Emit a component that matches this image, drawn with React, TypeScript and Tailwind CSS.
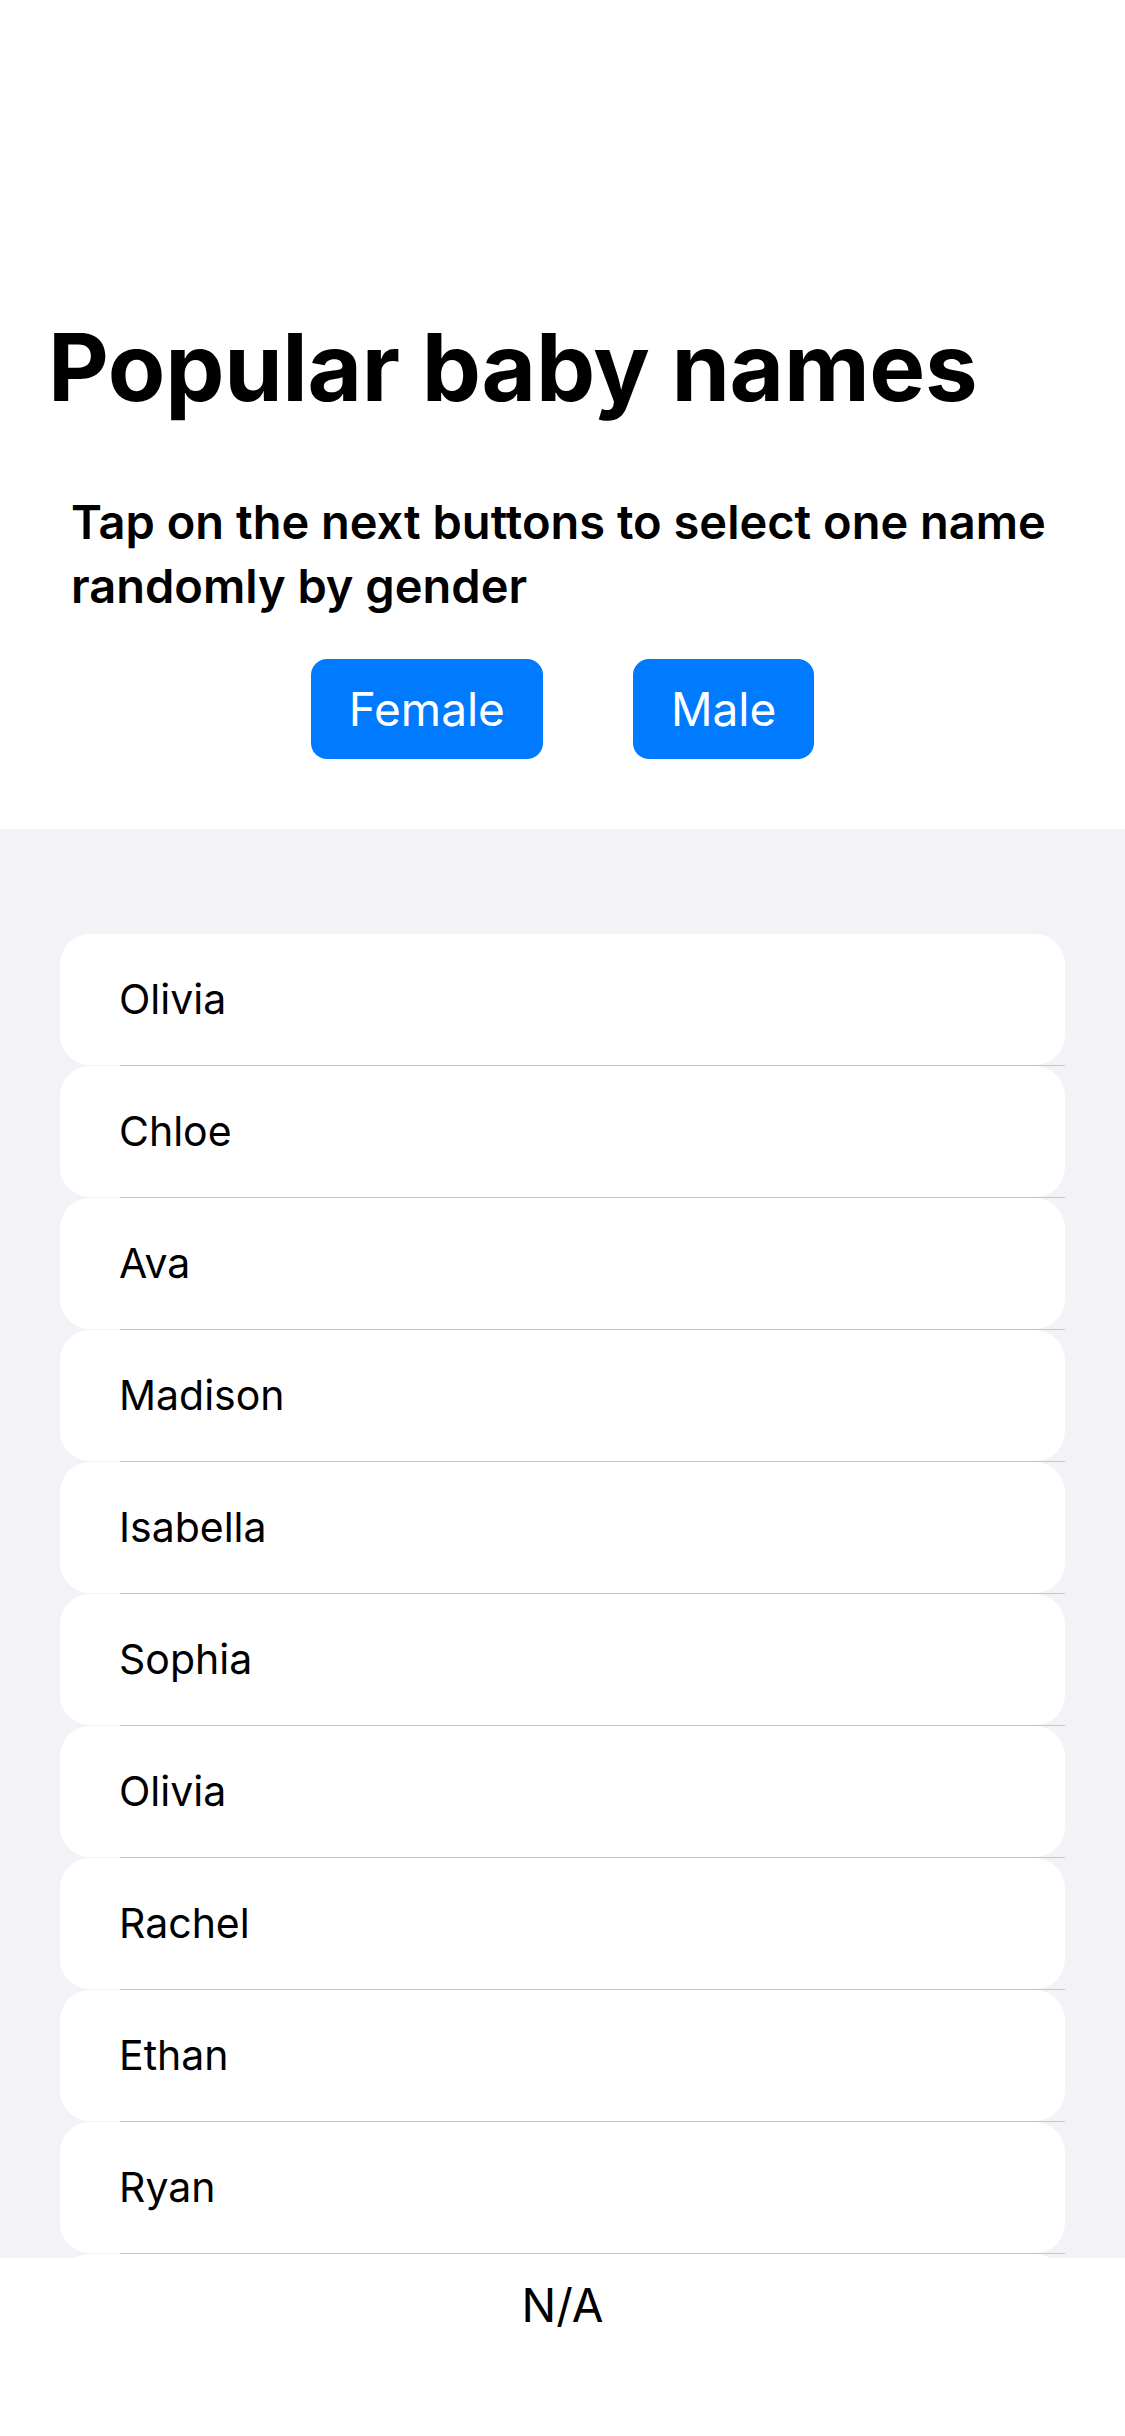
import React from 'react';

const names = ['Olivia', 'Chloe', 'Ava', 'Madison', 'Isabella', 'Sophia', 'Olivia', 'Rachel', 'Ethan', 'Ryan'];

export default function App() {
  return (
    <div className="w-[1125px] h-[2436px] flex flex-col bg-white font-['Inter',sans-serif] text-black overflow-hidden">
      {/* Header */}
      <div className="h-[829px] flex flex-col pt-[320px]">
        <h1 className="pl-[48px] text-[94px] leading-[94px] font-bold tracking-[-0.3px] whitespace-nowrap">Popular baby names</h1>
        <p className="mt-[76px] pl-[71px] pr-[20px] text-[47px] leading-[64px] font-semibold">
          Tap on the next buttons to select one name randomly by gender
        </p>
        <div className="mt-[41px] flex justify-center gap-[90px]">
          <button className="h-[100px] px-[38px] rounded-[16px] bg-[#007aff] text-white text-[46px] leading-[46px]">Female</button>
          <button className="h-[100px] px-[38px] rounded-[16px] bg-[#007aff] text-white text-[46px] leading-[46px]">Male</button>
        </div>
      </div>

      {/* List */}
      <div className="h-[1429px] overflow-hidden bg-[#f2f2f7] pt-[105px]">
        {names.map((n, i) => (
          <div key={i}>
            <div className="mx-[60px] h-[131px] rounded-[30px] bg-white flex items-center px-[59px] text-[41px] leading-[41px]">
              {n}
            </div>
            <div className="ml-[120px] mr-[60px] h-px bg-[#c6c6c8]" />
          </div>
        ))}
        {/* next row, hidden under the footer */}
        <div className="mx-[60px] h-[131px] rounded-[30px] bg-white" />
      </div>

      {/* Footer */}
      <div className="h-[178px] bg-white flex justify-center pt-[24px]">
        <span className="text-[46px] leading-[46px]">N/A</span>
      </div>
    </div>
  );
}
